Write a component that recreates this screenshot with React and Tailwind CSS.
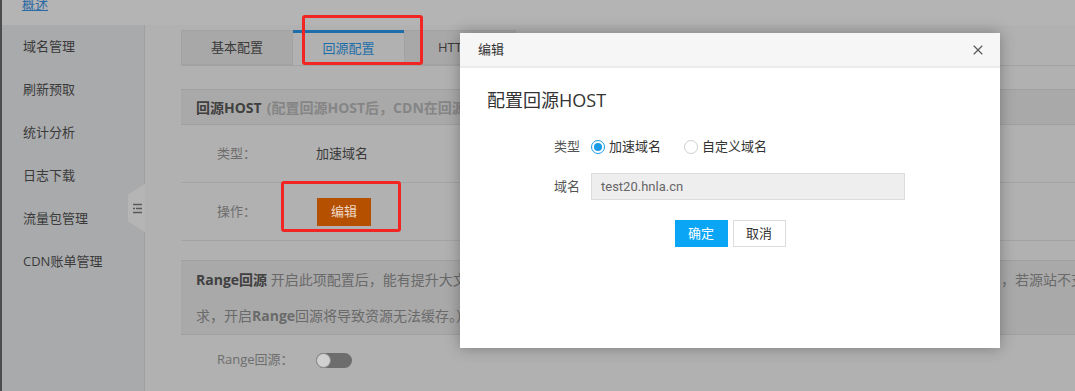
import { X } from 'lucide-react'

const SIDE = ['域名管理', '刷新预取', '统计分析', '日志下载', '流量包管理', 'CDN账单管理']

function Sidebar() {
  return (
    <aside className="w-[143px] shrink-0 bg-[#a9aaac] border-r border-[#a0a0a2]">
      {SIDE.map((s) => (
        <div key={s} className="h-[43px] flex items-center pl-[21px] text-[13px] text-[#3a3a3a]">
          {s}
        </div>
      ))}
    </aside>
  )
}

function Tabs() {
  return (
    <div className="flex h-[36px] border-b border-[#a2a2a2] text-[13px]">
      <div className="w-[112px] flex items-center justify-center bg-[#a8a8a8] border border-[#a2a2a2] text-[#3a3a3a]">基本配置</div>
      <div className="w-[111px] flex items-center justify-center bg-[#b1b1b1] border-t-[3px] border-[#1e6ea9] text-[#1e6ea9]">回源配置</div>
      <div className="w-[112px] flex items-center pl-[33px] bg-[#a8a8a8] border border-[#a2a2a2] text-[#3a3a3a]">HTTPS配置</div>
    </div>
  )
}

function Row({ label, children, h = 'h-[58px]', border = true }) {
  return (
    <div className={`${h} flex items-center pl-[36px] ${border ? 'border-b border-[#a4a4a4]' : ''}`}>
      <span className="w-[99px] text-[13px] text-[#6e6e6e]">{label}</span>
      {children}
    </div>
  )
}

function Page() {
  return (
    <main className="flex-1 pl-[36px] pt-[5px] overflow-hidden">
      <Tabs />

      {/* 回源HOST */}
      <div className="mt-[23px] h-[36px] flex items-center pl-[15px] bg-[#a9a9a9] border-y border-[#a0a0a0] text-[14px] font-bold whitespace-nowrap">
        <span className="text-[#404040]">回源HOST</span>
        <span className="ml-[5px] text-[#858585]">(配置回源HOST后，CDN在回源过程中会根据该配置访问源站)</span>
      </div>
      <Row label="类型：">
        <span className="text-[13px] text-[#3a3a3a]">加速域名</span>
      </Row>
      <Row label="操作：">
        <button className="ml-[1px] w-[54px] h-[28px] bg-[#b55000] text-[13px] text-[#efd9c8]">编辑</button>
      </Row>

      {/* Range回源 */}
      <div className="mt-[19px] pl-[15px] py-[0.5px] bg-[#a9a9a9] border-y border-[#a0a0a0] text-[14px] leading-[36px] text-[#6a6a6a] whitespace-nowrap">
        <div className="flex">
          <span className="w-[805px] shrink-0 overflow-hidden">
            <b className="text-[#404040]">Range回源</b> 开启此项配置后，能有提升大文件的分发效率，需要源站支持Range请求，否则回源可能失败
          </span>
          <span>，若源站不支持Range请</span>
        </div>
        <div>
          求，开启<b>Range</b>回源将导致资源无法缓存。）
        </div>
      </div>
      <Row label="Range回源：" h="h-[50px]" border={false}>
        <span className="w-[36px] h-[15px] rounded-full bg-[#6d6d6d] flex items-center">
          <span className="w-[15px] h-[15px] rounded-full bg-[#d0d0d0] border border-[#8a8a8a]" />
        </span>
      </Row>
    </main>
  )
}

function Radio({ checked, label }) {
  return (
    <label className="flex items-center gap-[4px] text-[13px] text-[#333]">
      <span
        className={`w-[14px] h-[14px] rounded-full border flex items-center justify-center ${
          checked ? 'border-[#1a9be8]' : 'border-[#cfcfcf]'
        }`}
      >
        {checked && <span className="w-[8px] h-[8px] rounded-full bg-[#1a9be8]" />}
      </span>
      {label}
    </label>
  )
}

function Modal() {
  return (
    <div className="absolute left-[458px] top-[33px] w-[540px] h-[315px] bg-white shadow-[0_0_14px_rgba(0,0,0,0.3)]">
      <div className="h-[35px] flex items-center justify-between pl-[18px] pr-[14px] bg-[#f6f6f6] border-b-2 border-[#ececec]">
        <span className="text-[13px] text-[#333]">编辑</span>
        <X size={16} strokeWidth={1.6} className="text-[#555]" />
      </div>
      <div className="pl-[27px] pt-[20px] text-[18px] leading-[24px] text-[#333]">配置回源HOST</div>
      <div className="mt-[21px] flex flex-col gap-[13px]">
        <div className="h-[27px] flex items-center">
          <span className="w-[120px] text-right text-[13px] text-[#555]">类型</span>
          <div className="ml-[11px] flex items-center gap-[23px]">
            <Radio checked label="加速域名" />
            <Radio label="自定义域名" />
          </div>
        </div>
        <div className="h-[27px] flex items-center">
          <span className="w-[120px] text-right text-[13px] text-[#555]">域名</span>
          <div className="ml-[11px] w-[314px] h-[27px] flex items-center pl-[9px] bg-[#eeeeee] border border-[#dcdcdc] text-[13px] text-[#666] font-['Roboto','Noto_Sans_CJK_SC',sans-serif]">
            test20.hnla.cn
          </div>
        </div>
      </div>
      <div className="mt-[20px] flex justify-center gap-[5px]">
        <button className="w-[53px] h-[27px] bg-[#0aa5f5] text-white text-[13px]">确定</button>
        <button className="w-[53px] h-[27px] bg-white border border-[#dcdcdc] text-[#333] text-[13px]">取消</button>
      </div>
    </div>
  )
}

export default function App() {
  return (
    <div className="relative w-[1075px] h-[391px] overflow-hidden flex flex-col bg-[#b1b1b1] border-l-2 border-[#4c4c4c] font-['Open_Sans','Noto_Sans_CJK_SC',sans-serif]">
      {/* top bar */}
      <div className="h-[25px] shrink-0 bg-[#b4b4b4] pl-[20px]">
        <span className="block -mt-[4px] text-[13px] leading-[16px] text-[#2b6aa5] underline">概述</span>
      </div>

      <div className="flex flex-1 min-h-0">
        <Sidebar />
        <Page />
      </div>

      {/* sidebar collapse handle */}
      <div className="absolute left-[126px] top-[184px] w-[17px] h-[48px] bg-[#b5b5b5] [clip-path:polygon(0_22%,100%_0,100%_100%,0_78%)] flex items-center justify-center">
        <svg width="9" height="11" viewBox="0 0 9 11" className="ml-[2px]">
          <g stroke="#5a5a5a" strokeWidth="1.6">
            <path d="M0 1.5h9" />
            <path d="M0 5.5h2M3 5.5h6" />
            <path d="M0 9.5h9" />
          </g>
        </svg>
      </div>

      <Modal />

      {/* annotations */}
      <div className="absolute left-[300px] top-[15px] w-[121px] h-[50px] border-[3px] border-[#f22525] rounded-[3px]" />
      <div className="absolute left-[279px] top-[181px] w-[120px] h-[51px] border-[3px] border-[#f22525] rounded-[3px]" />
    </div>
  )
}
